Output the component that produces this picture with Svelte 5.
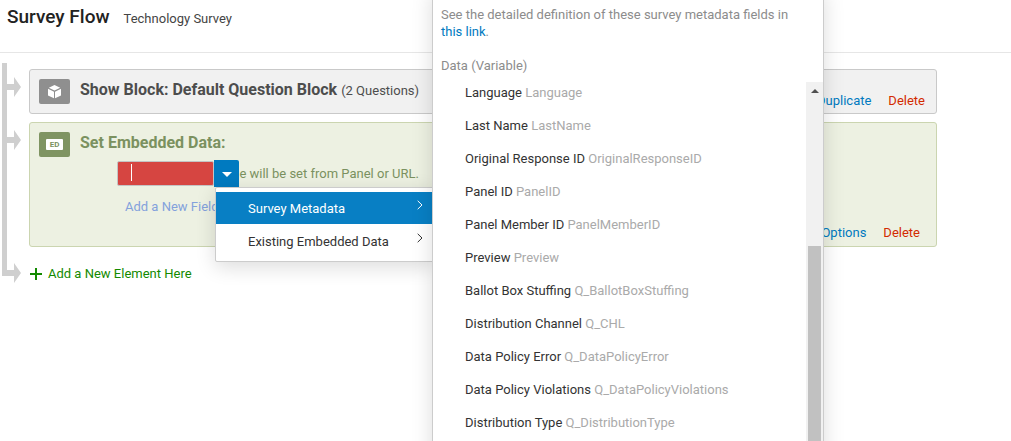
<script>
	let fieldName = $state('');
	let menuOpen = $state(true);
	let activeMenu = $state('metadata');

	const menuItems = [
		{ id: 'metadata', label: 'Survey Metadata' },
		{ id: 'existing', label: 'Existing Embedded Data' }
	];

	const metadataFields = [
		{ label: 'Language', variable: 'Language' },
		{ label: 'Last Name', variable: 'LastName' },
		{ label: 'Original Response ID', variable: 'OriginalResponseID' },
		{ label: 'Panel ID', variable: 'PanelID' },
		{ label: 'Panel Member ID', variable: 'PanelMemberID' },
		{ label: 'Preview', variable: 'Preview' },
		{ label: 'Ballot Box Stuffing', variable: 'Q_BallotBoxStuffing' },
		{ label: 'Distribution Channel', variable: 'Q_CHL' },
		{ label: 'Data Policy Error', variable: 'Q_DataPolicyError' },
		{ label: 'Data Policy Violations', variable: 'Q_DataPolicyViolations' },
		{ label: 'Distribution Type', variable: 'Q_DistributionType' }
	];

	function pick(field) {
		fieldName = field.variable;
		menuOpen = false;
	}
</script>

{#snippet rail()}
	<div class="rail">
		<svg width="14" height="20" viewBox="0 0 14 20" aria-hidden="true">
			<path d="M0 7h7V0l7 10-7 10v-7H0z" fill="#cfcfcf" />
		</svg>
	</div>
{/snippet}

<div class="page">
	<header>
		<h1>Survey Flow</h1>
		<span class="survey-name">Technology Survey</span>
	</header>

	<main class="flow">
		<div class="row">
			{@render rail()}
			<section class="block gray">
				<span class="block-icon">
					<svg width="15" height="15" viewBox="0 0 15 15" aria-hidden="true">
						<path d="M7.5 1 13.2 3.8 7.5 6.6 1.8 3.8z" fill="#fff" />
						<path d="M1 4.8 7 7.7v6.6L1 11.4z" fill="#fff" />
						<path d="M14 4.8 8 7.7v6.6l6-2.9z" fill="#fff" />
					</svg>
				</span>
				<div class="block-main">
					<h2>Show Block: Default Question Block <small>(2 Questions)</small></h2>
				</div>
				<nav class="actions">
					<a href="#duplicate">Duplicate</a>
					<a class="danger" href="#delete">Delete</a>
				</nav>
			</section>
		</div>

		<div class="row">
			{@render rail()}
			<section class="block green">
				<span class="block-icon"><span class="ed">ED</span></span>
				<div class="block-main">
					<h2>Set Embedded Data:</h2>
					<div class="field">
						<div class="picker">
							<input type="text" aria-label="Field name" bind:value={fieldName} />
							<span class="caret"></span>
							<button class="toggle" aria-label="Choose a field" onclick={() => (menuOpen = !menuOpen)}>
								<svg width="10" height="5" viewBox="0 0 10 5"><path d="M0 0h10L5 5z" fill="#fff" /></svg>
							</button>
							{#if menuOpen}
								<div class="menu">
									{#each menuItems as item}
										<button
											class="menu-item"
											class:active={activeMenu === item.id}
											onclick={() => (activeMenu = item.id)}
										>
											<span>{item.label}</span>
											<svg width="6" height="10" viewBox="0 0 6 10" aria-hidden="true">
												<path d="M.7.8 5 5 .7 9.2" fill="none" stroke="currentColor" />
											</svg>
										</button>
									{/each}
									{#if activeMenu === 'metadata'}
										<div class="submenu">
											<p class="help">
												See the detailed definition of these survey metadata fields in
												<a href="#metadata">this link</a>.
											</p>
											<p class="group">Data (Variable)</p>
											<div class="scroller">
												<ul>
													{#each metadataFields as field}
														<li>
															<button onclick={() => pick(field)}>
																{field.label} <span>{field.variable}</span>
															</button>
														</li>
													{/each}
												</ul>
												<div class="scrollbar">
													<svg width="8" height="4" viewBox="0 0 8 4"><path d="M0 4 4 0l4 4z" fill="#505050" /></svg>
													<div class="thumb"></div>
												</div>
											</div>
										</div>
									{/if}
								</div>
							{/if}
						</div>
						<span>Value will be set from Panel or URL.</span>
					</div>
					<a class="add-field" href="#add-field">Add a New Field</a>
				</div>
				<nav class="actions">
					<a href="#options">Options</a>
					<a class="danger" href="#delete">Delete</a>
				</nav>
			</section>
		</div>

		<div class="row last">
			{@render rail()}
			<a class="add-element" href="#add-element">
				<svg width="12" height="12" viewBox="0 0 12 12" aria-hidden="true">
					<path d="M6 0v12M0 6h12" stroke="#138a00" stroke-width="2" />
				</svg>
				Add a New Element Here
			</a>
		</div>
	</main>
</div>

<style>
	:global(body) {
		background: #fff;
	}

	.page {
		height: 100vh;
		overflow: hidden;
		font-family: Roboto, 'Liberation Sans', sans-serif;
		font-size: 13px;
		line-height: 17px;
		color: #333;
	}

	.page * {
		box-sizing: border-box;
	}

	a {
		color: #007ac0;
		text-decoration: none;
	}

	button {
		border: none;
		background: none;
		font: inherit;
		color: inherit;
		cursor: pointer;
	}

	header {
		display: flex;
		align-items: baseline;
		gap: 14px;
		height: 53px;
		padding: 5px 7px;
		border-bottom: 1px solid #e6e6e6;
	}

	h1 {
		margin: 0;
		font-size: 19px;
		font-weight: 500;
		line-height: 24px;
		color: #222;
	}

	.survey-name {
		color: #444;
	}

	.flow {
		padding: 10px 74px 0 2px;
	}

	.row {
		display: flex;
		gap: 8px;
	}

	.rail {
		flex: none;
		width: 19px;
		padding-top: 14px;
		border-left: 5px solid #cfcfcf;
	}

	.rail svg {
		display: block;
	}

	.last .rail {
		height: 27px;
	}

	.block {
		flex: 1;
		display: flex;
		margin: 6px 0 2px;
		padding-left: 9px;
		border: 1px solid #c9c9c9;
		border-radius: 3px;
	}

	.gray {
		min-height: 45px;
		background: #f1f1f1;
		color: #4d4d4d;
	}

	.green {
		min-height: 125px;
		background: #edf1e2;
		border-color: #cbd5b0;
		color: #7b9160;
	}

	.block-icon {
		flex: none;
		display: flex;
		align-items: center;
		justify-content: center;
		width: 31px;
		height: 25px;
		margin: 9px 10px 0 0;
		border-radius: 2px;
		background: #8f8f8f;
	}

	.green .block-icon {
		background: #7f9462;
	}

	.ed {
		width: 17px;
		height: 11px;
		border-radius: 1px;
		background: #fff;
		font-size: 8px;
		font-weight: 700;
		line-height: 11px;
		text-align: center;
	}

	.block-main {
		flex: 1;
	}

	h2 {
		margin: 10px 0 0;
		font-size: 16px;
		font-weight: 700;
		line-height: 20px;
	}

	small {
		font-size: 13px;
		font-weight: 400;
	}

	.actions {
		display: flex;
		align-self: flex-end;
		gap: 17px;
		padding: 0 11px 4px 0;
	}

	.green .actions {
		padding-right: 16px;
		padding-bottom: 5px;
	}

	.danger {
		color: #d32b00;
	}

	.field {
		display: flex;
		align-items: center;
		margin: 8px 0 0 37px;
	}

	.picker {
		position: relative;
		width: 97px;
		height: 25px;
	}

	input {
		display: block;
		width: 100%;
		height: 100%;
		padding: 0 13px;
		border: 1px solid #c4c4c4;
		border-radius: 2px;
		background: #d64541;
		font: inherit;
		color: #fff;
		outline: none;
	}

	.caret {
		position: absolute;
		top: 3px;
		left: 14px;
		width: 1px;
		height: 17px;
		background: #fff;
	}

	.toggle {
		position: absolute;
		top: -1px;
		left: 97px;
		display: flex;
		align-items: center;
		justify-content: center;
		width: 25px;
		height: 27px;
		padding: 2px 0 0;
		border-radius: 0 2px 0 0;
		background: #007ac0;
	}

	.menu {
		position: absolute;
		z-index: 1;
		top: 26px;
		left: 98px;
		width: 219px;
		padding: 4px 0;
		border: 1px solid #ccc;
		border-radius: 2px;
		background: #fff;
		box-shadow: 0 5px 20px rgba(0, 0, 0, 0.14);
		color: #333;
	}

	.menu-item {
		display: flex;
		justify-content: space-between;
		width: 100%;
		height: 32px;
		padding: 8px 10px 7px 32px;
		text-align: left;
	}

	.menu-item + .menu-item {
		margin-top: 1px;
	}

	.active {
		background: #087fc4;
		color: #fff;
	}

	.submenu {
		position: absolute;
		top: -200px;
		left: 216px;
		display: flex;
		flex-direction: column;
		width: 392px;
		height: 480px;
		padding-top: 17px;
		border: 1px solid #ccc;
		background: #fff;
		box-shadow: 0 5px 20px rgba(0, 0, 0, 0.14);
	}

	.help,
	.group {
		margin: 0 8px 17px;
		color: #8c8c8c;
	}

	.help {
		padding-right: 17px;
	}

	.group {
		margin-bottom: 8px;
	}

	.scroller {
		flex: 1;
		display: flex;
		overflow: hidden;
	}

	ul {
		flex: 1;
		margin: -6px 0 0;
		padding: 0;
		list-style: none;
	}

	li button {
		display: block;
		width: 100%;
		height: 33px;
		padding: 0 32px;
		text-align: left;
	}

	li span {
		color: #aaa;
	}

	.scrollbar {
		display: flex;
		flex-direction: column;
		align-items: center;
		gap: 153px;
		width: 17px;
		padding-top: 7px;
		background: #f1f1f1;
	}

	.thumb {
		flex: 1;
		width: 13px;
		background: #c1c1c1;
	}

	.add-field {
		display: block;
		width: max-content;
		margin: 12px 0 0 45px;
		color: #83a1dc;
	}

	.add-element {
		display: flex;
		align-items: center;
		gap: 6px;
		height: 17px;
		margin: 16px 0 0 1px;
		color: #138a00;
	}
</style>
